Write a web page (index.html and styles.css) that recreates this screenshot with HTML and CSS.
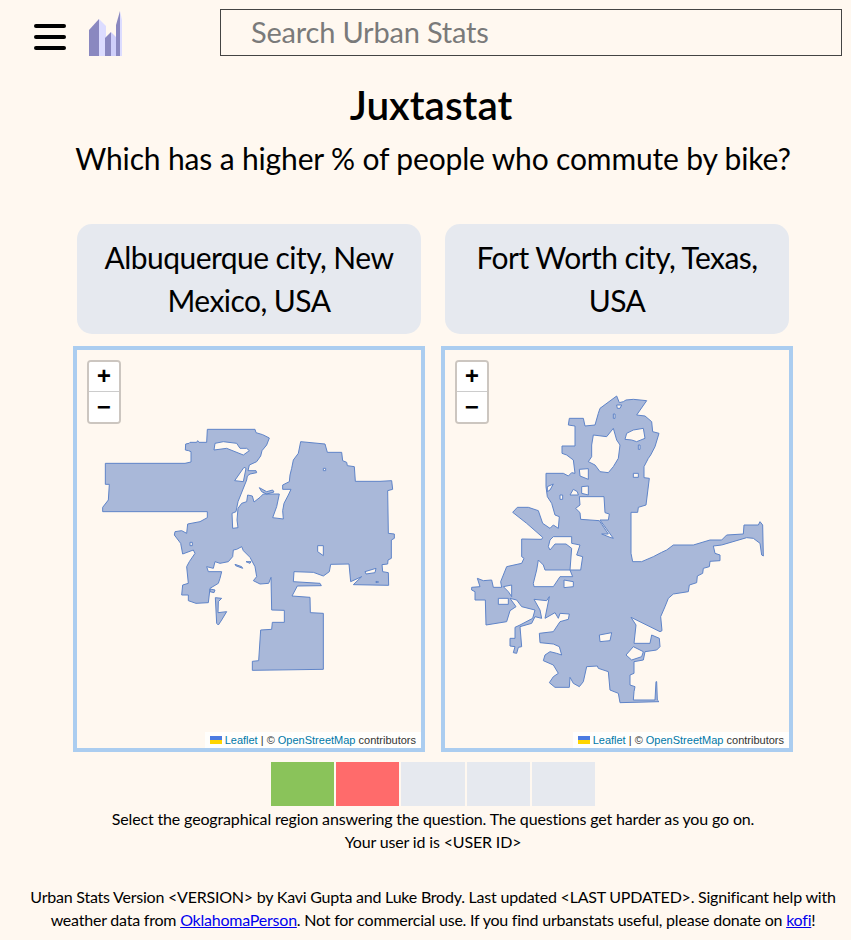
FILE: index.html
```html
<!DOCTYPE html>
<html lang="en">
<head>
<meta charset="utf-8">
<title>Juxtastat</title>
<link rel="stylesheet" href="styles.css">
</head>
<body>
<header class="topbar">
  <div class="burger"><span></span><span></span><span></span></div>
  <svg class="logo" viewBox="0 0 33 46" width="33" height="46">
    <polygon fill="#8a88c0" points="0,46 0,20 10,9 10,46"/>
    <polygon fill="#dcdcff" points="10,9 17,16 17,46 10,46"/>
    <polygon fill="#8a88c0" points="16,46 16,28 22,22 22,46"/>
    <polygon fill="#cfcffa" points="22,22 27,27 27,46 22,46"/>
    <polygon fill="#8a88c0" points="27,46 27,15 31,1 31,46"/>
    <polygon fill="#dcdcff" points="31,1 33,10 33,46 31,46"/>
  </svg>
  <div class="search">Search Urban Stats</div>
</header>
<main class="content">
  <h1 class="title">Juxtastat</h1>
  <p class="question">Which has a higher % of people who commute by bike?</p>
  <div class="pair">
    <div class="choice">Albuquerque city, New<br>Mexico, USA</div>
    <div class="choice">Fort Worth city, Texas,<br>USA</div>
    <div class="map">
      <svg class="shape" viewBox="-39 -210 1032 1194">
        <path fill-rule="evenodd" d="M46 130L285 130 303 126 303 95 296 92 286 90 287 72 297 70 300 67 320 67 323 62 327 67 350 67 352 28 495 28 498 38 518 44 538 54 530 75 516 92 512 108 500 125 478 135 474 152 498 152 500 158 480 162 472 168 470 180 458 210 444 245 438 275 426 280 428 325 444 323 441 300 444 265 455 250 470 245 473 225 487 228 492 246 510 232 520 222 568 222 560 260 548 293 580 297 578 272 582 250 595 225 603 208 578 208 578 195 598 185 600 165 605 145 610 120 625 100 632 65 705 72 712 97 755 97 758 122 770 127 772 137 793 140 796 184 870 184 905 182 908 208 893 212 895 340 913 342 913 355 904 360 904 415 894 420 893 432 876 434 878 455 895 458 896 496 790 494 815 470 782 485 777 432 722 433 718 455 700 468 670 457 612 455 610 485 690 490 694 497 622 498 606 528 660 532 661 578 700 580 700 748 487 751 487 724 506 722 512 630 545 628 547 607 583 607 583 571 545 570 543 472 536 490 510 492 490 482 500 470 495 440 480 412 460 392 455 380 440 388 430 390 428 410 415 425 390 430 375 425 370 445 350 440 355 455 395 455 390 475 385 490 360 505 355 548 318 550 295 542 295 525 275 525 278 495 295 490 290 440 298 425 315 400 310 390 278 402 272 370 253 345 255 335 275 332 290 340 293 312 330 305 352 293 352 275 38 275 38 262 55 240 58 193 46 193Z
        M372 90L375 70 400 65 440 70 450 85 470 85 478 92 460 105 435 95 410 85Z
        M434 182L462 142 468 145 460 185Z
        M683 377L700 377 700 407 690 400 683 395Z
        M300 367L307 367 307 377 300 377Z
        M700 145L707 145 707 152 700 152Z
        M825 455L858 445 855 458 828 462Z
        M858 484L866 486 858 488Z
        M508 203L530 215 548 210 552 216 530 222 515 215Z
        M435 433L455 440 458 445 437 437Z
        M468 425L483 425 480 430Z
        M360 507L375 510 372 518 360 515Z
        M376 533L395 535 385 545 384 578 410 575 395 600 385 615 380 610Z"/>
      </svg>
      <div class="zoom"><span class="zoom-btn">+</span><span class="zoom-btn">−</span></div>
      <div class="attr"><svg class="flag" viewBox="0 0 12 8" width="12" height="8"><rect width="12" height="4" fill="#4C7BE1"/><rect y="4" width="12" height="4" fill="#FFD500"/></svg> <a>Leaflet</a> | © <a>OpenStreetMap</a> contributors</div>
    </div>
    <div class="map">
      <svg class="shape" viewBox="-45 -120 1032 1194">
        <path fill-rule="evenodd" d="M470 18L478 38 490 35 498 30 520 28 560 32 530 75 555 78 575 95 578 125 597 130 585 170 572 195 565 205 552 230 552 263 568 265 558 345 535 352 533 367 513 367 513 490 518 515 545 515 580 500 605 487 620 480 640 465 700 465 750 450 785 450 800 435 850 432 852 405 895 405 900 395 908 405 910 498 905 495 900 460 880 445 860 443 785 465 760 468 765 490 780 495 780 512 750 514 748 530 730 535 728 550 712 558 710 578 688 585 685 605 640 612 625 625 615 650 602 680 606 722 600 725 513 682 528 705 522 760 570 760 575 735 598 745 600 770 590 780 555 785 550 810 522 815 522 850 510 855 510 885 525 890 522 905 520 930 585 930 588 875 590 875 592 930 597 935 480 938 475 910 450 900 445 845 415 835 412 828 380 830 370 875 358 890 340 880 330 862 328 892 285 892 268 878 280 860 295 850 280 825 250 812 255 795 270 785 290 790 305 795 298 770 280 762 240 758 238 730 280 725 300 695 325 688 328 672 300 670 295 685 285 668 255 685 268 620 260 632 222 628 240 660 245 685 225 680 215 700 180 710 185 770 175 772 170 790 160 788 165 770 150 768 150 745 165 745 165 712 180 705 218 685 225 660 185 650 170 630 150 625 168 650 150 662 140 695 78 705 76 630 45 630 45 605 35 600 35 592 60 590 52 565 70 572 95 570 100 592 125 592 122 575 140 530 185 520 192 505 185 500 185 447 245 448 248 442 200 400 158 367 172 352 205 352 235 362 248 400 270 415 280 405 295 415 298 380 285 375 275 340 262 320 258 290 258 250 310 250 325 258 335 248 345 250 340 210 320 195 306 190 306 168 345 168 345 108 325 105 328 85 370 85 375 108 405 105 415 70 420 55Z
        M400 135L440 140 460 115 470 150 480 165 475 205 460 230 445 248 420 245 405 225 385 215 395 200 395 165Z
        M358 238L385 236 385 268 360 258Z
        M358 320L432 320 435 368 448 372 445 390 420 390 460 445 450 442 425 432 445 432 418 392 362 388 360 368 347 355 360 345Z
        M330 315L340 298 352 305 355 315Z
        M365 290L385 288 385 315 365 310Z
        M280 440L335 440 335 460 360 465 350 495 368 500 362 540 330 540 335 475 318 462 285 462 270 480 265 470 270 450Z
        M235 510L250 525 255 540 330 540 338 560 300 560 280 590 222 590 220 580 230 540Z
        M312 570L340 575 340 590 312 593Z
        M115 625L145 625 145 643 115 643Z
        M130 590L155 585 155 620 145 605Z
        M418 735L455 728 450 752 420 755Z
        M520 770L550 785 545 800 515 810 498 795Z
        M300 315L308 315 308 328 300 328Z
        M262 290L280 282 270 300 262 305Z
        M500 130L520 120 550 115 555 145 530 155 515 150 495 148Z
        M535 165L540 165 540 178 535 178Z
        M520 250L535 250 535 262 520 262Z
        M460 72L465 72 465 85 460 85Z
        M470 45L485 45 480 55 472 55Z"/>
      </svg>
      <div class="zoom"><span class="zoom-btn">+</span><span class="zoom-btn">−</span></div>
      <div class="attr"><svg class="flag" viewBox="0 0 12 8" width="12" height="8"><rect width="12" height="4" fill="#4C7BE1"/><rect y="4" width="12" height="4" fill="#FFD500"/></svg> <a>Leaflet</a> | © <a>OpenStreetMap</a> contributors</div>
    </div>
  </div>
  <div class="progress">
    <span class="step right"></span><span class="step wrong"></span><span class="step"></span><span class="step"></span><span class="step"></span>
  </div>
  <p class="note">Select the geographical region answering the question. The questions get harder as you go on.<br>Your user id is &lt;USER ID&gt;</p>
  <footer class="foot">Urban Stats Version &lt;VERSION&gt; by Kavi Gupta and Luke Brody. Last updated &lt;LAST UPDATED&gt;. Significant help with<br>weather data from <a href="#">OklahomaPerson</a>. Not for commercial use. If you find urbanstats useful, please donate on <a href="#">kofi</a>!</footer>
</main>
</body>
</html>
```
FILE: styles.css
```css
* { box-sizing: border-box; }
html, body { margin: 0; padding: 0; }
body {
  background: #fff8f0;
  color: #000;
  font-family: "Lato", "Liberation Sans", sans-serif;
  height: 940px;
  overflow: hidden;
}
.topbar {
  display: flex;
  align-items: flex-start;
  padding: 9px 9px 0 34px;
}
.burger {
  width: 32px;
  margin-top: 15px;
  display: flex;
  flex-direction: column;
  gap: 7.5px;
}
.burger span {
  display: block;
  height: 3.7px;
  background: #000;
  border-radius: 2px;
}
.logo { margin: 1px 98px 0 23px; flex: none; }
.search {
  flex: 1;
  height: 47px;
  border: 1px solid #444;
  padding-left: 30px;
  font-size: 29px;
  line-height: 44px;
  color: #7a7a7a;
  letter-spacing: -0.2px;
}
.content { padding-left: 15px; text-align: center; }
.title {
  margin: 22px 4px 0 0;
  font-size: 40.5px;
  line-height: 54px;
  font-weight: 600;
}
.question {
  margin: 4px 0 0;
  font-size: 30px;
  line-height: 44px;
  letter-spacing: -0.15px;
}
.pair {
  width: 736px;
  margin: 44px auto 0;
  display: grid;
  grid-template-columns: 1fr 1fr;
  row-gap: 12px;
}
.choice {
  margin: 0 12px;
  height: 110px;
  padding: 12px 0;
  border-radius: 15px;
  background: #e6e9ef;
  font-size: 30px;
  line-height: 43px;
  letter-spacing: -0.55px;
}
.map {
  position: relative;
  margin: 0 8px;
  height: 406px;
  border: 4px solid #abcdf0;
}
.shape {
  position: absolute;
  inset: 0;
  width: 100%;
  height: 100%;
  display: block;
}
.shape path {
  fill: #a9b8d9;
  stroke: #5f84c8;
  stroke-width: 3;
  stroke-linejoin: round;
}
.zoom {
  position: absolute;
  left: 10px;
  top: 10px;
  width: 34px;
  border: 2px solid rgba(0,0,0,.2);
  border-radius: 4px;
  background-clip: padding-box;
  display: flex;
  flex-direction: column;
}
.zoom-btn {
  display: block;
  height: 30px;
  background: #fff;
  font: bold 24px/34px "Liberation Mono", monospace;
  text-align: center;
  color: #000;
}
.zoom-btn:first-child { border-bottom: 1px solid #ccc; border-radius: 2px 2px 0 0; height: 30px; line-height: 31px; }
.zoom-btn:last-child { border-radius: 0 0 2px 2px; }
.attr {
  position: absolute;
  right: 0;
  bottom: 0;
  padding: 0 5px;
  background: rgba(255,255,255,.8);
  font: 11px/16px "Liberation Sans", Arial, sans-serif;
  color: #333;
  white-space: nowrap;
}
.attr a { color: #0078a8; }
.flag { display: inline; }
.progress {
  width: 324px;
  margin: 10px auto 0;
  display: flex;
  gap: 2px;
}
.step { flex: 1; height: 44px; background: #e6e9ef; }
.step.right { background: #8ac35a; }
.step.wrong { background: #ff6b6b; }
.note {
  margin: 0.5px 0 0;
  font-size: 16px;
  line-height: 23px;
  letter-spacing: -0.15px;
}
.foot {
  margin: 32px 0 0;
  font-size: 16px;
  line-height: 23px;
  letter-spacing: -0.22px;
}
.foot a { color: #0000ee; text-decoration: underline; }
```
